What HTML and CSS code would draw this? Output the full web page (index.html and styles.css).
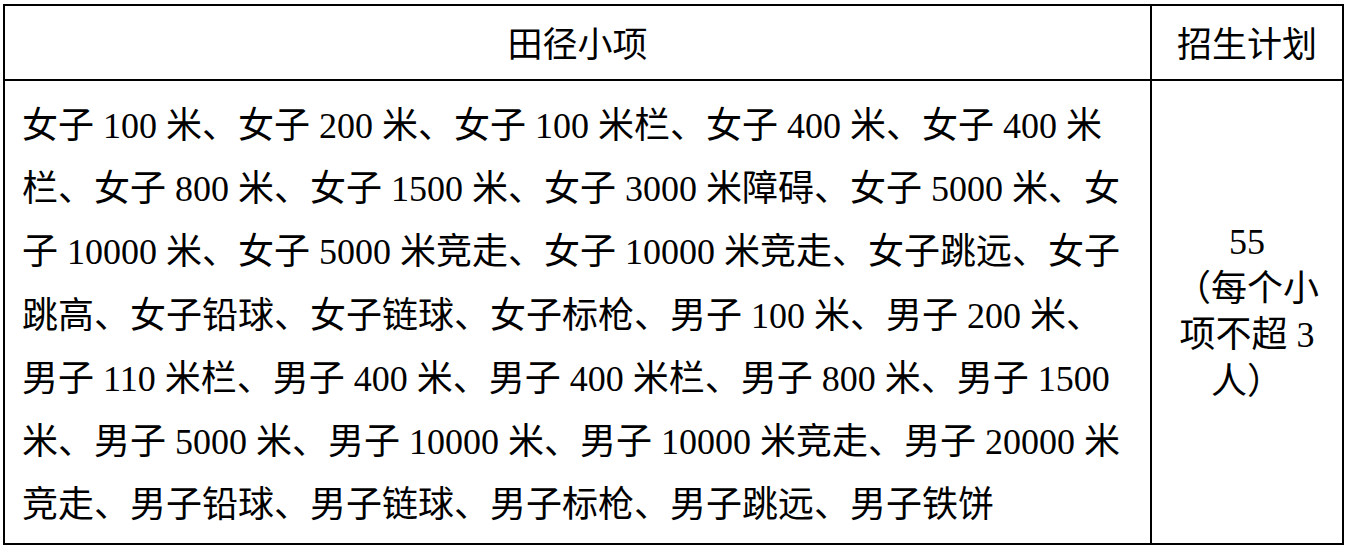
FILE: index.html
```html
<!DOCTYPE html>
<html lang="zh-CN">
<head>
<meta charset="utf-8">
<title>田径小项</title>
<link rel="stylesheet" href="styles.css">
</head>
<body>
<div class="table">
  <div class="cell head head-main">田径小项</div>
  <div class="cell head head-side">招生计划</div>
  <div class="cell body-main">
    <span class="line">女子 100 米、女子 200 米、女子 100 米栏、女子 400 米、女子 400 米</span>
    <span class="line">栏、女子 800 米、女子 1500 米、女子 3000 米障碍、女子 5000 米、女</span>
    <span class="line">子 10000 米、女子 5000 米竞走、女子 10000 米竞走、女子跳远、女子</span>
    <span class="line">跳高、女子铅球、女子链球、女子标枪、男子 100 米、男子 200 米、</span>
    <span class="line">男子 110 米栏、男子 400 米、男子 400 米栏、男子 800 米、男子 1500</span>
    <span class="line">米、男子 5000 米、男子 10000 米、男子 10000 米竞走、男子 20000 米</span>
    <span class="line">竞走、男子铅球、男子链球、男子标枪、男子跳远、男子铁饼</span>
  </div>
  <div class="cell body-side">
    <span class="line">55</span>
    <span class="line">（每个小</span>
    <span class="line">项不超 3</span>
    <span class="line">人）</span>
  </div>
</div>
</body>
</html>
```
FILE: styles.css
```css
html, body {
  background: #ffffff;
}
body {
  margin: 0;
  padding: 4px 3px;
  color: #000000;
}
.table {
  width: 1341px;
  height: 541px;
  box-sizing: border-box;
  border: 2px solid #000000;
  display: grid;
  grid-template-columns: 1147px 190px;
  grid-template-rows: 75px 462px;
}
.cell {
  box-sizing: border-box;
}
.head {
  border-bottom: 2px solid #000000;
  display: flex;
  align-items: center;
  justify-content: center;
  font-family: "Noto Sans CJK SC", "Liberation Sans", sans-serif;
  font-size: 35px;
  padding-bottom: 2px;
}
.head-main,
.body-main {
  border-right: 2px solid #000000;
}
.body-main {
  padding: 14px 0 0 17px;
  font-family: "Liberation Serif", "Noto Sans CJK SC", serif;
  font-size: 36px;
  line-height: 63.2px;
  white-space: nowrap;
}
.line {
  display: block;
}
.body-side {
  display: flex;
  flex-direction: column;
  justify-content: center;
  align-items: center;
  font-family: "Liberation Serif", "Noto Sans CJK SC", serif;
  font-size: 36px;
  line-height: 46.5px;
  white-space: nowrap;
}
.body-side .line {
  text-align: center;
}
```
